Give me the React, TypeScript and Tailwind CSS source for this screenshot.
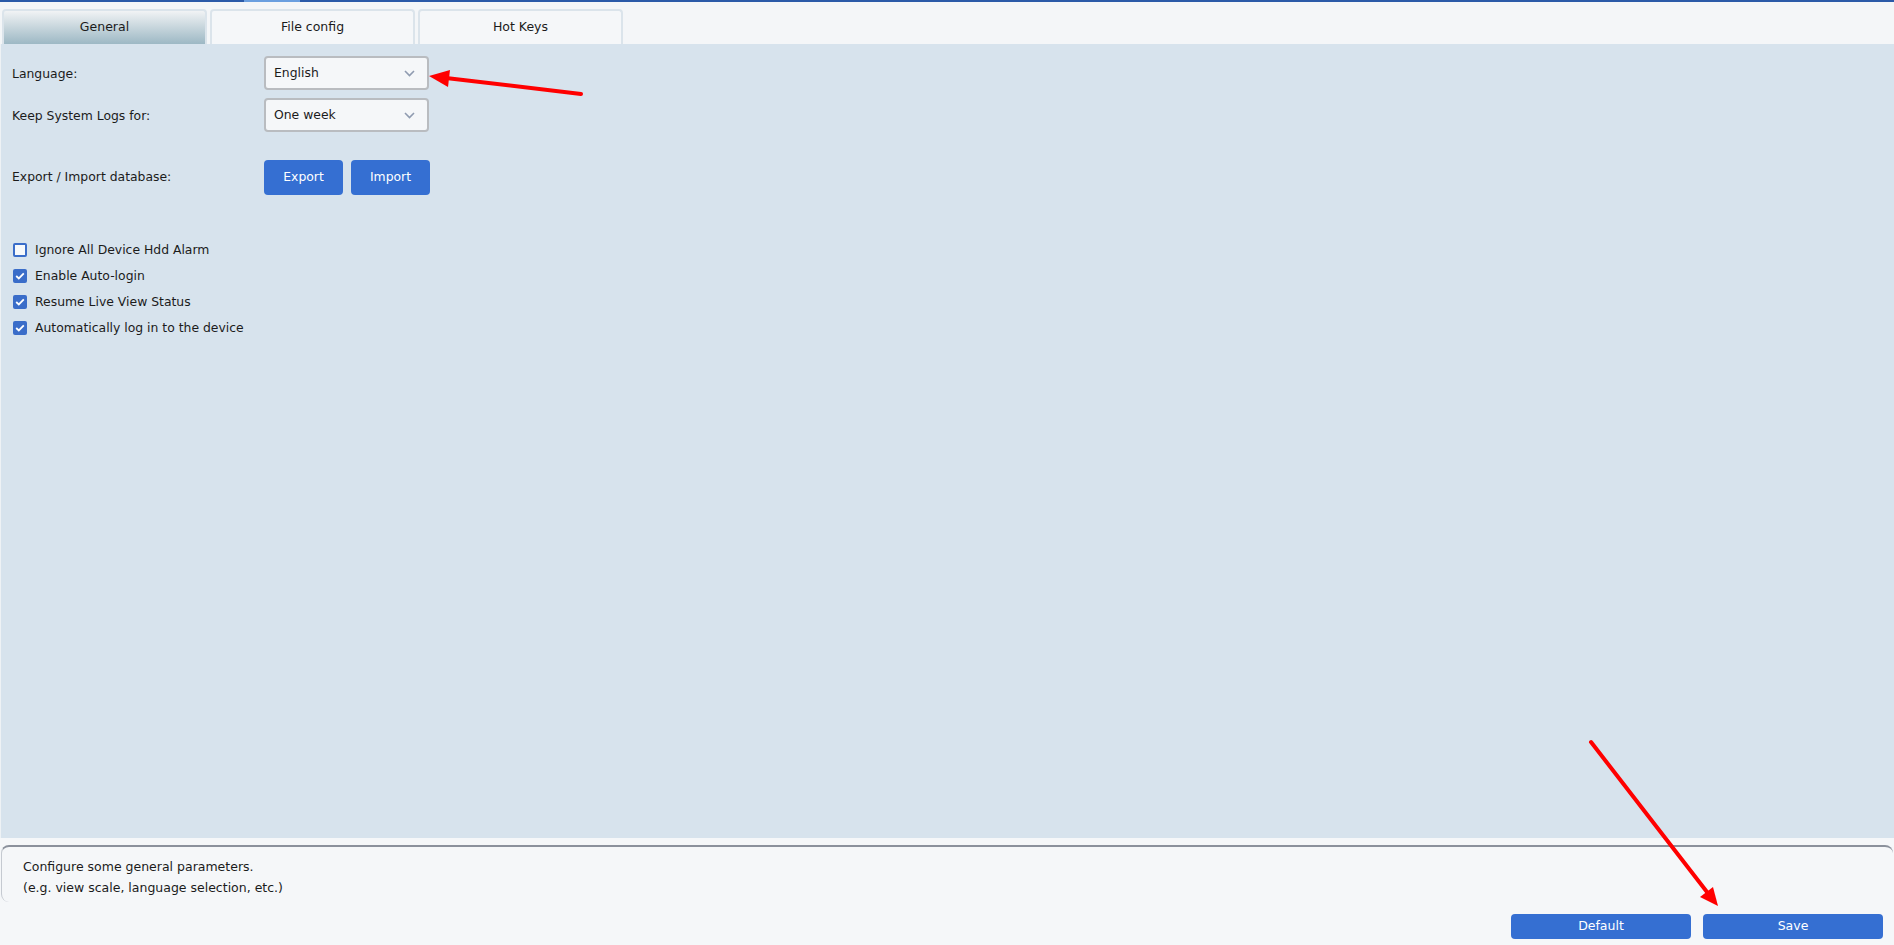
import { useState } from 'react';

const TABS = ['General', 'File config', 'Hot Keys'];

const OPTIONS = [
    { label: 'Ignore All Device Hdd Alarm', checked: false },
    { label: 'Enable Auto-login', checked: true },
    { label: 'Resume Live View Status', checked: true },
    { label: 'Automatically log in to the device', checked: true },
];

function Chevron() {
    return (
        <svg width="11" height="7" viewBox="0 0 11 7" className="shrink-0">
            <path d="M1 1 L5.5 5.5 L10 1" fill="none" stroke="#8f9bb0" strokeWidth="1.6" />
        </svg>
    );
}

function Select({ value }: { value: string }) {
    return (
        <div className="w-[165px] h-[34px] flex items-center justify-between pl-[8px] pr-[12px] bg-[#f5f7f9] border-2 border-[#b9bcc0] rounded-[4px]">
            <span>{value}</span>
            <Chevron />
        </div>
    );
}

function Checkbox({ checked }: { checked: boolean }) {
    if (!checked) {
        return <span className="w-[14px] h-[14px] rounded-[2px] border-2 border-[#3a6dc9] bg-[#f7f9fb]" />;
    }
    return (
        <span className="w-[14px] h-[14px] rounded-[2px] bg-[#3a6dc9] flex items-center justify-center">
            <svg width="10" height="8" viewBox="0 0 10 8">
                <path d="M1.2 4 L3.8 6.4 L8.8 1.4" fill="none" stroke="#ffffff" strokeWidth="1.8" />
            </svg>
        </span>
    );
}

export default function App() {
    const [active, setActive] = useState(0);

    return (
        <div
            className="relative w-full h-[945px] flex flex-col bg-[#f5f7f9] text-[12.4px] text-[#1b1b1b]"
            style={{ fontFamily: '"DejaVu Sans", Verdana, sans-serif' }}
        >
            {/* top strip + tabs */}
            <div className="h-[44px] flex flex-col bg-[#f4f6f8]">
                <div className="h-[2px] flex bg-[#2b5aa8]">
                    <div className="w-[244px]" />
                    <div className="w-[56px] bg-[#6b9fdf]" />
                </div>
                <div className="flex gap-[3px] pl-[2px] mt-[7px] h-[35px]">
                    {TABS.map((tab, i) => (
                        <button
                            key={tab}
                            onClick={() => setActive(i)}
                            className={
                                i === active
                                    ? 'w-[205px] h-full text-[12.5px] rounded-t-[4px] border-2 border-b-0 border-[#dbe4eb] bg-gradient-to-b from-[#f1f3f5] to-[#9db8c4]'
                                    : 'w-[205px] h-full text-[12.5px] rounded-t-[4px] border-2 border-b-0 border-[#dbe4eb] bg-[#f5f7f9]'
                            }
                        >
                            {tab}
                        </button>
                    ))}
                </div>
            </div>

            {/* main panel */}
            <div className="flex-1 bg-[#d7e3ed] border-l border-[#eef2f5] pl-[11px] pt-[12px]">
                <div className="flex items-center h-[34px]">
                    <span className="w-[252px] pt-[2px]">Language:</span>
                    <Select value="English" />
                </div>
                <div className="flex items-center h-[34px] mt-[8px]">
                    <span className="w-[252px] pt-[2px]">Keep System Logs for:</span>
                    <Select value="One week" />
                </div>
                <div className="flex items-center h-[35px] mt-[28px]">
                    <span className="w-[252px]">Export / Import database:</span>
                    <div className="flex gap-[8px]">
                        <button className="w-[79px] h-[35px] rounded-[4px] bg-[#356fd2] text-white">Export</button>
                        <button className="w-[79px] h-[35px] rounded-[4px] bg-[#356fd2] text-white">Import</button>
                    </div>
                </div>
                <div className="flex flex-col mt-[42px] pl-[1px]">
                    {OPTIONS.map((opt) => (
                        <label key={opt.label} className="flex items-center gap-[8px] h-[26px]">
                            <Checkbox checked={opt.checked} />
                            <span>{opt.label}</span>
                        </label>
                    ))}
                </div>
            </div>

            {/* footer */}
            <div className="h-[107px] flex flex-col px-[1px] pt-[7px]">
                <div className="h-[57px] flex flex-col justify-center pt-[4px] pl-[21px] text-[12.5px] leading-[21px] border-t-2 border-l border-t-[#8b919c] border-l-[#c5cad1] rounded-l-[8px] rounded-r-[8px]">
                    <span>Configure some general parameters.</span>
                    <span>(e.g. view scale, language selection, etc.)</span>
                </div>
                <div className="flex justify-end gap-[12px] mt-[12px] pr-[10px]">
                    <button className="w-[180px] h-[25px] rounded-[4px] bg-[#356fd2] text-white text-[12.5px]">Default</button>
                    <button className="w-[180px] h-[25px] rounded-[4px] bg-[#356fd2] text-white text-[12.5px]">Save</button>
                </div>
            </div>

            {/* red annotation arrows */}
            <svg className="absolute inset-0 pointer-events-none" width="1894" height="945">
                <line x1="581" y1="94" x2="446" y2="78" stroke="#ff0000" strokeWidth="4" strokeLinecap="round" />
                <polygon points="429,76 450,70 448,87" fill="#ff0000" />
                <line x1="1591" y1="742" x2="1707" y2="892" stroke="#ff0000" strokeWidth="4" strokeLinecap="round" />
                <polygon points="1718,906 1700,897 1713,887" fill="#ff0000" />
            </svg>
        </div>
    );
}
